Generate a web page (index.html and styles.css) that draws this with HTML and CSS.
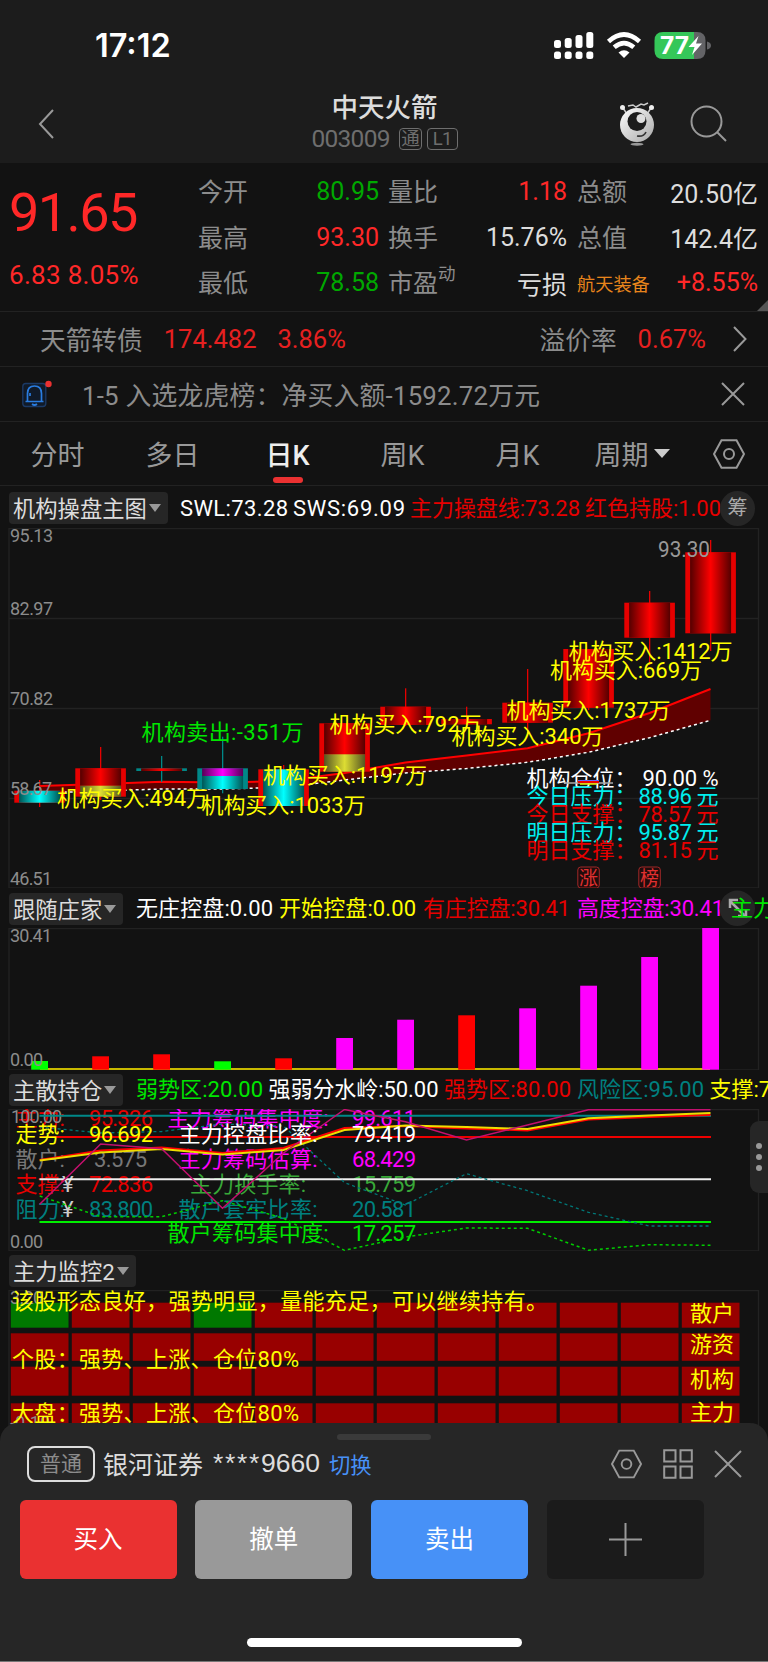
FILE: index.html
```
<!DOCTYPE html>
<html lang="zh-CN">
<head>
  <meta charset="UTF-8" />
  <meta name="viewport" content="width=device-width, initial-scale=1.0" />
  <title>中天火箭 003009</title>
  <link rel="stylesheet" href="styles.css">
</head>
<body>
  <div class="status-bar">
    <span class="clock">17:12</span>
    <svg class="status-icons" width="160" height="30" viewBox="550 30 160 30">
      <g fill="#fff">
        <rect x="553" y="40" width="7" height="8" rx="2.5"/><rect x="563.7" y="38" width="7" height="10" rx="2.5"/>
        <rect x="574.5" y="35" width="7" height="13" rx="2.5"/><rect x="585.3" y="32" width="7" height="16" rx="2.5"/>
        <rect x="553" y="51.500" width="7" height="7.500" rx="2.500"/><rect x="563.7" y="51.500" width="7" height="7.500" rx="2.500"/>
        <rect x="574.5" y="51.500" width="7" height="7.500" rx="2.500"/><rect x="585.3" y="51.500" width="7" height="7.500" rx="2.500"/>
        <path d="M623 58l-5.500-5.500q5.500-4.500 11 0z"/>
      </g>
      <path d="M607.500 41.500q15.500-14 31 0M613.200 47.300q9.800-8.500 19.600 0" fill="none" stroke="#fff" stroke-width="4.600"/>
      <path d="M662 32h31v27h-31q-8.500 0-8.500-8.500v-10q0-8.500 8.500-8.500z" fill="#35c759"/>
      <path d="M693 32h3q8.500 0 8.500 8.500v10q0 8.500-8.500 8.500h-3z" fill="#636366"/>
      <path d="M706 41.500q4 1 4 4t-4 4z" fill="#636366"/>
      <text class="battery" x="659" y="54" textLength="29" lengthAdjust="spacingAndGlyphs">77</text>
      <path d="M697.500 36l-10 11h6l-2.500 8 10-11.500h-6z" fill="#fff"/>
    </svg>
  </div>

  <header class="nav">
    <svg width="16" height="30" viewBox="0 0 16 30"><path d="M15 1L2 15l13 14" class="ico"/></svg>
    <div class="nav-title">
      <h1>中天火箭</h1>
      <p>003009 <i>通</i><i>L1</i></p>
    </div>
    <svg class="mascot" width="38" height="44" viewBox="617 101 38 44">
      <defs><linearGradient id="shell" x2="1" y2="1"><stop stop-color="#fff"/><stop offset="1" stop-color="#a8a8a8"/></linearGradient></defs>
      <path d="M622 107l4 6M650 107l-4 6M627 105l5-1 3 2 5-3 3 1 4-2" fill="none" stroke="#ccc" stroke-width="1.500"/>
      <circle cx="621.500" cy="106.500" r="2.500" fill="#eee"/><circle cx="650.500" cy="106.500" r="2.500" fill="#eee"/>
      <circle cx="636" cy="124" r="17" fill="url(#shell)"/>
      <circle cx="636" cy="120.500" r="9.500" fill="#1c1c1c"/>
      <circle cx="640" cy="117.500" r="4.500" fill="#ddd"/>
      <path d="M636 135q7 1 9-4" fill="none" stroke="#333" stroke-width="1.600"/>
      <ellipse cx="636" cy="143.300" rx="6.500" ry="1.500" fill="#999"/>
    </svg>
    <svg width="37" height="37" viewBox="0 0 37 37"><circle cx="16.500" cy="16.500" r="15" class="ico"/><path d="M27 27l9 9" class="ico"/></svg>
  </header>

  <section class="quote">
    <div class="price">
      <b>91.65</b>
      <span>6.83 8.05%</span>
    </div>
    <dl class="c1">
      <dt>今开</dt><dd class="down">80.95</dd>
      <dt>最高</dt><dd class="up">93.30</dd>
      <dt>最低</dt><dd class="down">78.58</dd>
    </dl>
    <dl class="c2">
      <dt>量比</dt><dd class="up">1.18</dd>
      <dt>换手</dt><dd>15.76%</dd>
      <dt>市盈<sup>动</sup></dt><dd>亏损</dd>
    </dl>
    <dl class="c3">
      <dt>总额</dt><dd>20.50亿</dd>
      <dt>总值</dt><dd>142.4亿</dd>
      <dt class="sector">航天装备</dt><dd class="up">+8.55%</dd>
    </dl>
  </section>

  <section class="bond">
    <span>天箭转债</span><em>174.482</em><em>3.86%</em>
    <span class="premium">溢价率</span><em>0.67%</em>
    <svg width="14" height="26" viewBox="0 0 14 26"><path d="M1 1l11.500 12L1 25" class="ico"/></svg>
  </section>

  <section class="notice">
    <svg width="30" height="30" viewBox="22 378 30 30">
      <rect x="22.800" y="382.500" width="23" height="23" rx="3" fill="#101a28" stroke="#1b3a66" stroke-width="1.300"/>
      <path d="M25.500 400.500h18M27.500 400.500v-8q0-7.500 7-7.500t7 7.500v8M30 395v-3M32 403q2.500 2 5 0" fill="none" stroke="#2a7de0" stroke-width="1.700"/>
      <circle cx="48.500" cy="383" r="3.200" fill="#ea3131"/>
    </svg>
    <span>1-5 入选龙虎榜：净买入额-1592.72万元</span>
    <svg width="24" height="24" viewBox="0 0 24 24"><path d="M1 1l22 22M23 1L1 23" class="ico"/></svg>
  </section>

  <nav class="tabs">
    <a>分时</a><a>多日</a><a class="active">日K</a><a>周K</a><a>月K</a>
    <a>周期<svg width="16" height="9" viewBox="0 0 16 9"><path d="M0 0h16L8 9z" fill="#ccc"/></svg></a>
    <a><svg width="32" height="30" viewBox="0 0 32 30"><path d="M8.500 1.200h15L31 15l-7.500 13.800h-15L1 15z" class="ico"/><circle cx="16" cy="15" r="5" class="ico"/></svg></a>
  </nav>

  <!-- 主图 -->
  <section class="panel">
    <div class="panel-head">
      <button>机构操盘主图<i></i></button>
      <svg width="768" height="42" viewBox="0 486 768 42">
        <text x="180" y="515.500" textLength="108" class="w">SWL:73.28</text>
        <text x="293" y="515.500" textLength="112" class="w">SWS:69.09</text>
        <text x="410" y="515.500" textLength="170" class="r">主力操盘线:73.28</text>
        <text x="585" y="515.500" textLength="136" class="r">红色持股:1.00</text>
      </svg>
      <span class="round">筹</span>
    </div>
    <svg class="plot" width="768" height="360" viewBox="0 528 768 360">
      <defs>
        <linearGradient id="gr"><stop stop-color="#500"/><stop offset=".5" stop-color="#f00"/><stop offset="1" stop-color="#500"/></linearGradient>
        <linearGradient id="gc"><stop stop-color="#055"/><stop offset=".5" stop-color="#0ff"/><stop offset="1" stop-color="#055"/></linearGradient>
        <linearGradient id="gm"><stop stop-color="#505"/><stop offset=".5" stop-color="#f0f"/><stop offset="1" stop-color="#505"/></linearGradient>
        <linearGradient id="gy"><stop stop-color="#552"/><stop offset=".5" stop-color="#dd3"/><stop offset="1" stop-color="#552"/></linearGradient>
      </defs>
      <path d="M9 528.500h749.500v359.500H9zM9 618.500h749.500M9 708.500h749.500M9 798.500h749.500" class="frame"/>
      <polygon fill="#600000" points="39.700,786 100.700,784 161.700,781.700 222.500,782.500 283.500,781 344.500,773 405.500,762.500 466.500,755.500 527.500,748.300 588.500,733.300 649.500,713 710.500,689 710.500,720.300 649.500,737.700 588.500,752.300 527.500,762.300 466.500,768.500 405.500,773 344.500,780 283.500,787.300 222.500,789 161.700,789 100.700,791 39.700,793"/>
      <polyline fill="none" stroke="#f00" stroke-width="2" points="39.700,786 100.700,784 161.700,781.700 222.500,782.500 283.500,781 344.500,773 405.500,762.500 466.500,755.500 527.500,748.300 588.500,733.300 649.500,713 710.500,689"/>
      <polyline fill="none" stroke="#fff" stroke-width="1.500" stroke-dasharray="3 3" points="39.700,793 100.700,791 161.700,789 222.500,789 283.500,787.300 344.500,780 405.500,773 466.500,768.500 527.500,762.300 588.500,752.300 649.500,737.700 710.500,720.300"/>
      <g id="candles"></g>
      <g class="axis">
        <text x="10" y="542" textLength="43">95.13</text>
        <text x="10" y="615" textLength="43">82.97</text>
        <text x="10" y="705" textLength="43">70.82</text>
        <text x="10" y="795" textLength="42">58.67</text>
        <text x="10" y="885" textLength="42">46.51</text>
      </g>
      <text x="658" y="556.500" textLength="52" lengthAdjust="spacingAndGlyphs" fill="#999">93.30</text>
      <text x="141.500" y="740" textLength="162" class="g">机构卖出:-351万</text>
      <g class="y">
        <text x="57" y="805.500" textLength="151">机构买入:494万</text>
        <text x="201.500" y="812.500" textLength="164">机构买入:1033万</text>
        <text x="263" y="782.500" textLength="164">机构买入:1197万</text>
        <text x="329.500" y="732" textLength="152">机构买入:792万</text>
        <text x="451.500" y="743.500" textLength="152">机构买入:340万</text>
        <text x="506.500" y="718" textLength="164">机构买入:1737万</text>
        <text x="550" y="678" textLength="152">机构买入:669万</text>
        <text x="568.500" y="658.500" textLength="164">机构买入:1412万</text>
      </g>
      <g class="w"><text x="526.500" y="786">机构仓位：</text><text x="642.500" y="786" textLength="76">90.00 %</text></g>
      <path d="M564 783h49" stroke="#aaa" stroke-width="1.500"/>
      <path d="M578 780.500h21" stroke="#66f"/><path d="M578 782h21" stroke="#e00" stroke-width="2"/><path d="M580 784h17" stroke="#ee0" stroke-width="1.500"/>
      <g class="c"><text x="526.500" y="804">今日压力：</text><text x="638.500" y="804" textLength="80">88.96 元</text></g>
      <g class="r"><text x="526.500" y="822">今日支撑：</text><text x="638.500" y="822" textLength="80">78.57 元</text></g>
      <g class="c"><text x="526.500" y="840">明日压力：</text><text x="638.500" y="840" textLength="80">95.87 元</text></g>
      <g class="r"><text x="526.500" y="858">明日支撑：</text><text x="638.500" y="858" textLength="80">81.15 元</text></g>
      <g class="mark">
        <rect x="577.800" y="867" width="21.500" height="21" rx="3"/><text x="579" y="884.500">涨</text>
        <rect x="638.800" y="867" width="21.500" height="21" rx="3"/><text x="640" y="884.500">榜</text>
      </g>
    </svg>
  </section>

  <!-- 跟随庄家 -->
  <section class="panel">
    <div class="panel-head h40">
      <button>跟随庄家<i></i></button>
      <svg width="768" height="40" viewBox="0 888 768 40">
        <text x="136" y="915.500" textLength="137" class="w">无庄控盘:0.00</text>
        <text x="279" y="915.500" textLength="137" class="y">开始控盘:0.00</text>
        <text x="423" y="915.500" textLength="147" class="r">有庄控盘:30.41</text>
        <text x="577" y="915.500" textLength="147" class="m">高度控盘:30.41</text>
        <circle cx="737.300" cy="908.300" r="17.700" fill="#262626"/>
        <path d="M730 901l14 14M730 908v-8h8M746 909v7h-8" fill="none" stroke="#aaa" stroke-width="2.500"/>
        <text x="731" y="915.500" class="g">主力控盘</text>
      </svg>
    </div>
    <svg class="plot" width="768" height="142" viewBox="0 928 768 142">
      <path d="M9 928.500h749.500v141.500H9z" class="frame"/>
      <path d="M40 1069h670" stroke="#c8b900" stroke-width="2"/>
      <g id="bars"></g>
      <g class="axis">
        <text x="10" y="942" textLength="42">30.41</text>
        <text x="10" y="1066" textLength="33">0.00</text>
      </g>
    </svg>
  </section>

  <!-- 主散持仓 -->
  <section class="panel">
    <div class="panel-head h39">
      <button>主散持仓<i></i></button>
      <svg width="768" height="39" viewBox="0 1070 768 39">
        <text x="136" y="1097" textLength="127" class="g">弱势区:20.00</text>
        <text x="268.500" y="1097" textLength="170" class="w">强弱分水岭:50.00</text>
        <text x="444" y="1097" textLength="127" class="r">强势区:80.00</text>
        <text x="577" y="1097" textLength="127" class="t">风险区:95.00</text>
        <text x="709.500" y="1097" class="y">支撑:72.84</text>
      </svg>
    </div>
    <svg class="plot" width="768" height="142" viewBox="0 1109 768 142">
      <path d="M9 1109.500h749.500v141.500H9z" class="frame"/>
      <g class="r"><text x="15.500" y="1126">主力:</text><text x="89" y="1126" textLength="64">95.326</text></g>
      <g class="m"><text x="167.500" y="1126" textLength="161">主力筹码集中度:</text><text x="352" y="1126" textLength="64">99.611</text></g>
      <g class="s"><text x="15.500" y="1167">散户:</text><text x="94" y="1167" textLength="53">3.575</text></g>
      <g class="m"><text x="178.500" y="1167" textLength="139">主力筹码估算:</text><text x="352" y="1167" textLength="64">68.429</text></g>
      <g class="r"><text x="15.500" y="1192">支撑:</text><text x="89" y="1192" textLength="64">72.836</text></g>
      <g class="g2"><text x="190" y="1192" textLength="116">主力换手率:</text><text x="352" y="1192" textLength="64">15.759</text></g>
      <g class="t"><text x="15.500" y="1217">阻力:</text><text x="89" y="1217" textLength="64">83.800</text><text x="178.500" y="1217" textLength="139">散户套牢比率:</text><text x="352" y="1217" textLength="64">20.581</text></g>
      <g fill="#ccc"><text x="62" y="1192">¥</text><text x="62" y="1217">¥</text></g>
      <g class="g"><text x="167.500" y="1241" textLength="161">散户筹码集中度:</text><text x="352" y="1241" textLength="64">17.257</text></g>
      <g class="axis"><text x="11" y="1123" textLength="51">100.00</text><text x="10" y="1247.500" textLength="33">0.00</text></g>
      <g fill="none" stroke-width="2">
        <path d="M39.500 1115.700H711" stroke="#088"/>
        <path d="M39.500 1137H711" stroke="#e00"/>
        <path d="M39.500 1179.300H711" stroke="#eee"/>
        <path d="M39.500 1222H711" stroke="#0e0"/>
        <polyline stroke="#077" stroke-width="1.300" stroke-dasharray="3 3" points="39.700,1127 100.700,1133 161.700,1131.500 222.500,1124 283.500,1126 344.500,1182.700 405.500,1205 466.500,1173.700 527.500,1190.700 588.500,1212.300 649.500,1226 710.500,1226"/>
        <polyline stroke="#0c0" stroke-width="1.500" stroke-dasharray="3 3" points="39.700,1196 100.700,1216.700 161.700,1216.700 222.500,1200.700 283.500,1218.300 344.500,1250.300 405.500,1237 466.500,1228 527.500,1228.300 588.500,1250.300 649.500,1244.700 710.500,1245.300"/>
        <polyline stroke="#f00" points="39.700,1160 100.700,1150.500 161.700,1147.500 222.500,1153 283.500,1148 344.500,1128 405.500,1126 466.500,1128.500 527.500,1130.500 588.500,1119.500 649.500,1117 710.500,1115"/>
        <polyline stroke="#ed0" points="39.700,1160.500 100.700,1152.500 161.700,1149 222.500,1154.500 283.500,1150 344.500,1130 405.500,1125.500 466.500,1127 527.500,1129 588.500,1118.300 649.500,1115.500 710.500,1113"/>
        <polyline stroke="#c4106e" stroke-width="1.500" points="39.700,1204.300 100.700,1144 161.700,1148.700 222.500,1208.300 283.500,1153 344.500,1109.500 405.500,1121.700 466.500,1140 527.500,1125 588.500,1109.700 710.500,1109.700"/>
      </g>
      <g class="y"><text x="15.500" y="1142">走势:</text><text x="89" y="1142" textLength="64">96.692</text></g>
      <g class="w"><text x="178.500" y="1142" textLength="139">主力控盘比率:</text><text x="352" y="1142" textLength="64">79.419</text></g>
    </svg>
    <div class="side-tab"><i></i><i></i><i></i></div>
  </section>

  <!-- 主力监控 -->
  <section class="panel monitor">
    <div class="panel-head h39">
      <button>主力监控2<i></i></button>
    </div>
    <svg class="plot" width="768" height="140" viewBox="0 1290 768 140">
      <path d="M9 1290.500h749.500v145H9z" class="frame"/>
      <g id="cells"></g>
      <g class="axis"><text x="10" y="1304" textLength="33">3.20</text><text x="10" y="1429" textLength="40">-0.10</text></g>
      <g class="y">
        <text x="12" y="1308.500" textLength="536">该股形态良好，强势明显，量能充足，可以继续持有。</text>
        <text x="12" y="1367" textLength="287">个股：强势、上涨、仓位80%</text>
        <text x="12" y="1421" textLength="287">大盘：强势、上涨、仓位80%</text>
        <text x="690" y="1321">散户</text><text x="690" y="1351.500">游资</text>
        <text x="690" y="1387">机构</text><text x="690" y="1419.500">主力</text>
      </g>
    </svg>
  </section>

  <footer class="sheet">
    <div class="handle"></div>
    <div class="account">
      <span class="type">普通</span>
      <span class="broker">银河证券</span>
      <span class="number"><i>****</i>9660</span>
      <a>切换</a>
      <svg class="first" width="31" height="30" viewBox="0 0 32 30"><path d="M8.500 1.200h15L31 15l-7.500 13.800h-15L1 15z" class="ico"/><circle cx="16" cy="15" r="5" class="ico"/></svg>
      <svg width="30" height="30" viewBox="0 0 30 30"><path d="M1.200 1.200h11.300v11.300H1.200zM17.500 1.200h11.300v11.300H17.500zM1.200 17.500h11.300v11.300H1.200zM17.500 17.500h11.300v11.300H17.500z" class="ico"/></svg>
      <svg width="28" height="28" viewBox="0 0 28 28"><path d="M1 1l26 26M27 1L1 27" class="ico"/></svg>
    </div>
    <div class="actions">
      <button class="buy">买入</button>
      <button class="cancel">撤单</button>
      <button class="sell">卖出</button>
      <button class="add"><svg width="33" height="33" viewBox="0 0 33 33"><path d="M16.500 0v33M0 16.500h33" class="ico"/></svg></button>
    </div>
    <div class="home"></div>
  </footer>

  <script src="chart.js"></script>
</body>
</html>
```
FILE: styles.css
```
* {
  box-sizing: border-box;
}
body {
  margin: 0;
  width: 768px;
  height: 1662px;
  overflow: hidden;
  background: #121212;
  color: #ddd;
  font-family: Roboto, "Noto Sans CJK SC", sans-serif;
  font-size: 22px;
}
h1, p, dl, dd {
  margin: 0;
}
i, em {
  font-style: normal;
}
svg {
  display: block;
  flex: none;
}
button {
  border: 0;
  padding: 0;
  font: inherit;
}
.ico {
  fill: none;
  stroke: #999;
  stroke-width: 2;
}

/* status bar + title */
.status-bar {
  display: flex;
  justify-content: space-between;
  height: 86px;
  padding: 30px 57px 0 95px;
  background: #1c1c1c;
}
.clock {
  font: 600 32.5px/32px Inter, sans-serif;
  letter-spacing: 0;
  color: #fff;
}
.battery {
  font: 700 24px Inter, sans-serif;
  fill: #fff;
}
.nav {
  display: flex;
  align-items: center;
  height: 77px;
  padding: 0 41px 0 38px;
  background: #1c1c1c;
}
.nav svg {
  margin-top: -2px;
}
.nav-title {
  flex: 1;
  padding-left: 97px;
  text-align: center;
}
h1 {
  margin-top: -3px;
  font-size: 26.5px;
  font-weight: 500;
  line-height: 32px;
}
.nav p {
  display: flex;
  justify-content: center;
  align-items: center;
  font-size: 24.5px;
  line-height: 30px;
  letter-spacing: -0.7px;
  color: #6e6e6e;
}
.nav p i {
  height: 22px;
  margin-left: 5px;
  padding: 0 1.5px;
  border: 1px solid #6e6e6e;
  border-radius: 4px;
  font-size: 18.5px;
  line-height: 20px;
}
.nav p i:first-child {
  margin-left: 9px;
}
.nav p i:last-child {
  padding: 0 5px;
}
.mascot {
  margin-right: 34px;
}

/* quote */
.quote {
  position: relative;
  display: flex;
  height: 149px;
  padding-left: 9px;
  border-bottom: 1px solid #222;
}
.quote::after {
  content: "";
  position: absolute;
  right: 0;
  bottom: 0;
  border: solid transparent;
  border-width: 11px 0 0 11px;
  border-bottom: 11px solid #555;
  border-top: 0;
}
.price {
  width: 189px;
  color: #ff2828;
}
.price b {
  display: block;
  height: 94px;
  padding-top: 20px;
  font-size: 54px;
  font-weight: 400;
  line-height: 60px;
  letter-spacing: -1.6px;
}
.price span {
  font-size: 26px;
  line-height: 36px;
  letter-spacing: 0.3px;
}
.quote dl {
  display: grid;
  grid-template-columns: auto 1fr;
  grid-template-rows: repeat(3, 45.5px);
  align-items: center;
  padding-top: 6px;
  font-size: 25px;
}
.quote dd {
  text-align: right;
  white-space: nowrap;
}
.quote dt {
  margin-top: -3px;
  color: #8c8c8c;
  white-space: nowrap;
}
.quote sup {
  font-size: 17.5px;
  line-height: 0;
  vertical-align: 12px;
}
.quote .sector {
  margin-top: 0;
  font-size: 18.2px;
  color: #e8851c;
}
.c1 { width: 181px; }
.c2 { width: 179px; margin-left: 9px; }
.c3 { width: 181px; margin-left: 10px; }
.up { color: #ff2828; }
.down { color: #00a800; }

.bond, .notice {
  display: flex;
  align-items: center;
  height: 55px;
  border-bottom: 1px solid #222;
  color: #8c8c8c;
}
.bond {
  padding: 0 21px 0 40px;
  font-size: 25.7px;
}
.bond span {
  margin-top: -2px;
}
.bond em {
  margin-left: 21px;
  color: #e62020;
  font-size: 25.5px;
}
.bond .premium {
  margin-left: auto;
}
.bond svg {
  margin-left: 27px;
}
.notice {
  padding: 0 23px 0 22px;
  font-size: 25.8px;
  letter-spacing: 0.22px;
}
.notice span {
  margin: -2px auto 0 30px;
}

.tabs {
  display: grid;
  grid-template-columns: repeat(5, 115px) 114px 79px;
  height: 64px;
  border-bottom: 1px solid #222;
  font-size: 27px;
  color: #999;
}
.tabs a {
  position: relative;
  display: flex;
  justify-content: center;
  align-items: center;
}
.tabs svg {
  margin-left: 5px;
}
.tabs a:last-child svg {
  margin: 0;
}
.tabs .active {
  font-weight: 500;
  color: #eee;
}
.tabs .active::after {
  content: "";
  position: absolute;
  bottom: 2px;
  width: 30px;
  height: 6px;
  border-radius: 3px;
  background: #ea3131;
}

/* chart panels */
.panel {
  position: relative;
}
.panel-head {
  position: relative;
  height: 42px;
  padding: 6px 0 0 9px;
}
.panel-head.h40 { height: 40px; padding-top: 5px; }
.panel-head.h39 { height: 39px; padding-top: 4px; }
.panel-head button {
  display: flex;
  align-items: center;
  height: 32px;
  padding: 0 7px 3px 4px;
  border-radius: 4px;
  background: #262626;
  color: #ddd;
  font-size: 22.3px;
}
.panel-head button i {
  margin: 2px 0 0 2px;
  border: 6.5px solid transparent;
  border-top: 8px solid #999;
  border-bottom: 0;
}
.panel-head svg {
  position: absolute;
  left: 0;
  top: 0;
}
.round {
  position: absolute;
  left: 720px;
  top: 5px;
  width: 35px;
  height: 35px;
  border-radius: 50%;
  background: #262626;
  font-size: 20px;
  line-height: 34px;
  text-align: center;
  color: #aaa;
}
.panel text {
  font-size: 22px;
  white-space: pre;
}
.frame {
  fill: none;
  stroke: #222;
  stroke-width: 1.3;
}
.panel .axis text {
  font-size: 18px;
  fill: #8c8c8c;
}
.w { fill: #fff; }
.y { fill: #ff0; }
.r { fill: #e60000; }
.g { fill: #00e600; }
.g2 { fill: #38a838; }
.c { fill: #0ee; }
.m { fill: #f0f; }
.t { fill: #008080; }
.s { fill: #777; }
.mark rect {
  fill: #200c0c;
  stroke: #a02828;
}
.panel .mark text {
  font-size: 19px;
  fill: #e03030;
}
.side-tab {
  position: absolute;
  right: 0;
  top: 51px;
  display: flex;
  flex-direction: column;
  justify-content: center;
  gap: 5px;
  width: 18px;
  height: 72px;
  padding-left: 6px;
  border-radius: 9px 0 0 9px;
  background: #262626;
}
.side-tab i {
  width: 6px;
  height: 6px;
  border-radius: 50%;
  background: #999;
}
.monitor {
  height: 172px;
}

/* trade sheet */
.sheet {
  position: relative;
  height: 239px;
  padding-top: 10.5px;
  border-bottom: 1px solid #777;
  border-radius: 18px 18px 0 0;
  background: #262626;
}
.handle {
  width: 94px;
  height: 6px;
  margin: 0 auto;
  border-radius: 3px;
  background: #3a3a3a;
}
.account {
  display: flex;
  align-items: center;
  height: 48px;
  padding: 0 26px 0 27px;
}
.type {
  width: 68px;
  height: 36px;
  border: 2px solid #ddd;
  border-radius: 8px;
  font-size: 21px;
  line-height: 32px;
  text-align: center;
  color: #8c8c8c;
}
.broker {
  margin: -2px 0 0 8px;
  font-size: 25px;
}
.number {
  margin-left: 10px;
  font: 26.5px "Liberation Sans", sans-serif;
}
.number i {
  letter-spacing: 1.7px;
}
.account a {
  margin-left: 9px;
  font-size: 21.3px;
  color: #4791f7;
}
.account svg {
  margin-left: 21px;
}
.account .first {
  margin-left: auto;
}
.actions {
  display: flex;
  gap: 18.800px;
  margin: 12px 0 0 19.500px;
}
.actions button {
  display: flex;
  justify-content: center;
  align-items: center;
  width: 157px;
  height: 79px;
  padding-bottom: 3px;
  border-radius: 6px;
  font-size: 24.500px;
  color: #fff;
}
.actions .add {
  padding: 0;
}
.buy { background: #ea3131; }
.cancel { background: #999; }
.sell { background: #4791f7; }
.add { background: #1b1b1b; }
.home {
  width: 275px;
  height: 9px;
  margin: 59px auto 0;
  border-radius: 5px;
  background: #fff;
}
```
FILE: chart.js
```
const x0 = 39.6;
const step = 61;
const rect = (x, y, w, h, fill) => `<rect x="${x}" y="${y}" width="${w}" height="${h}" fill="${fill}"/>`;

// edge colour, high, low, then body segments [top, bottom, gradient]
const candles = [
  ["#e60000", 780, 807, [[790.7, 802.7, "gc"]]],
  ["#e60000", 747, 800, [[768.3, 785.7, "gr"], [785.7, 796.7, "gy"]]],
  ["#088", 756, 782, [[768.3, 771, "gr"]]],
  ["#088", 736.7, 793.3, [[768.3, 776, "gm"], [776, 789, "gc"]]],
  ["#e60000", 765, 806, [[769.3, 806, "gc"]]],
  ["#e60000", 723.3, 771.7, [[723.3, 754.3, "gr"], [754.3, 771.7, "gy"]]],
  ["#e60000", 688.3, 726, [[706.7, 725, "gr"]]],
  ["#e60000", 706.7, 725, [[719, 724.3, "gr"]]],
  ["#e60000", 669, 733, [[702.7, 722.7, "gr"]]],
  ["#e60000", 649, 710, [[649, 707.7, "gr"]]],
  ["#e60000", 591, 665, [[602.7, 637.7, "gr"]]],
  ["#e60000", 540, 651, [[552.3, 633.3, "gr"]]],
];
document.getElementById("candles").innerHTML = candles.map(([edge, high, low, parts], i) => {
  const x = x0 + step * i;
  const top = parts[0][0];
  const bottom = parts[parts.length - 1][1];
  return rect(x - 0.6, high, 1.3, low - high, edge)
    + rect(x - 25.3, top, 50.6, bottom - top, edge)
    + parts.map(([a, b, g]) => rect(x - 20.5, a, 41, b - a, `url(#${g})`)).join("");
}).join("");

const bars = [
  [1061, "#0f0"], [1056.3, "#f00"], [1054.3, "#f00"], [1061.3, "#0f0"], [1058.3, "#f00"], [1038, "#f0f"],
  [1019.7, "#f0f"], [1015.3, "#f00"], [1008.3, "#f0f"], [985.7, "#f0f"], [957, "#f0f"], [928, "#f0f"],
];
document.getElementById("bars").innerHTML = bars.map(([top, fill], i) =>
  rect(x0 + step * i - 8.4, top, 16.8, 1069.7 - top, fill)).join("");

const rows = [[1302.7, 25], [1333.3, 27.5], [1366.7, 29], [1403.3, 30]];
let cells = "";
rows.forEach(([y, h], r) => {
  for (let i = 0; i < 12; i++) {
    const green = r === 0 && (i === 0 || i === 3);
    cells += rect(10.8 + step * i, y, 57.7, h, green ? "#007800" : "#980000");
  }
});
document.getElementById("cells").innerHTML = cells;
```
